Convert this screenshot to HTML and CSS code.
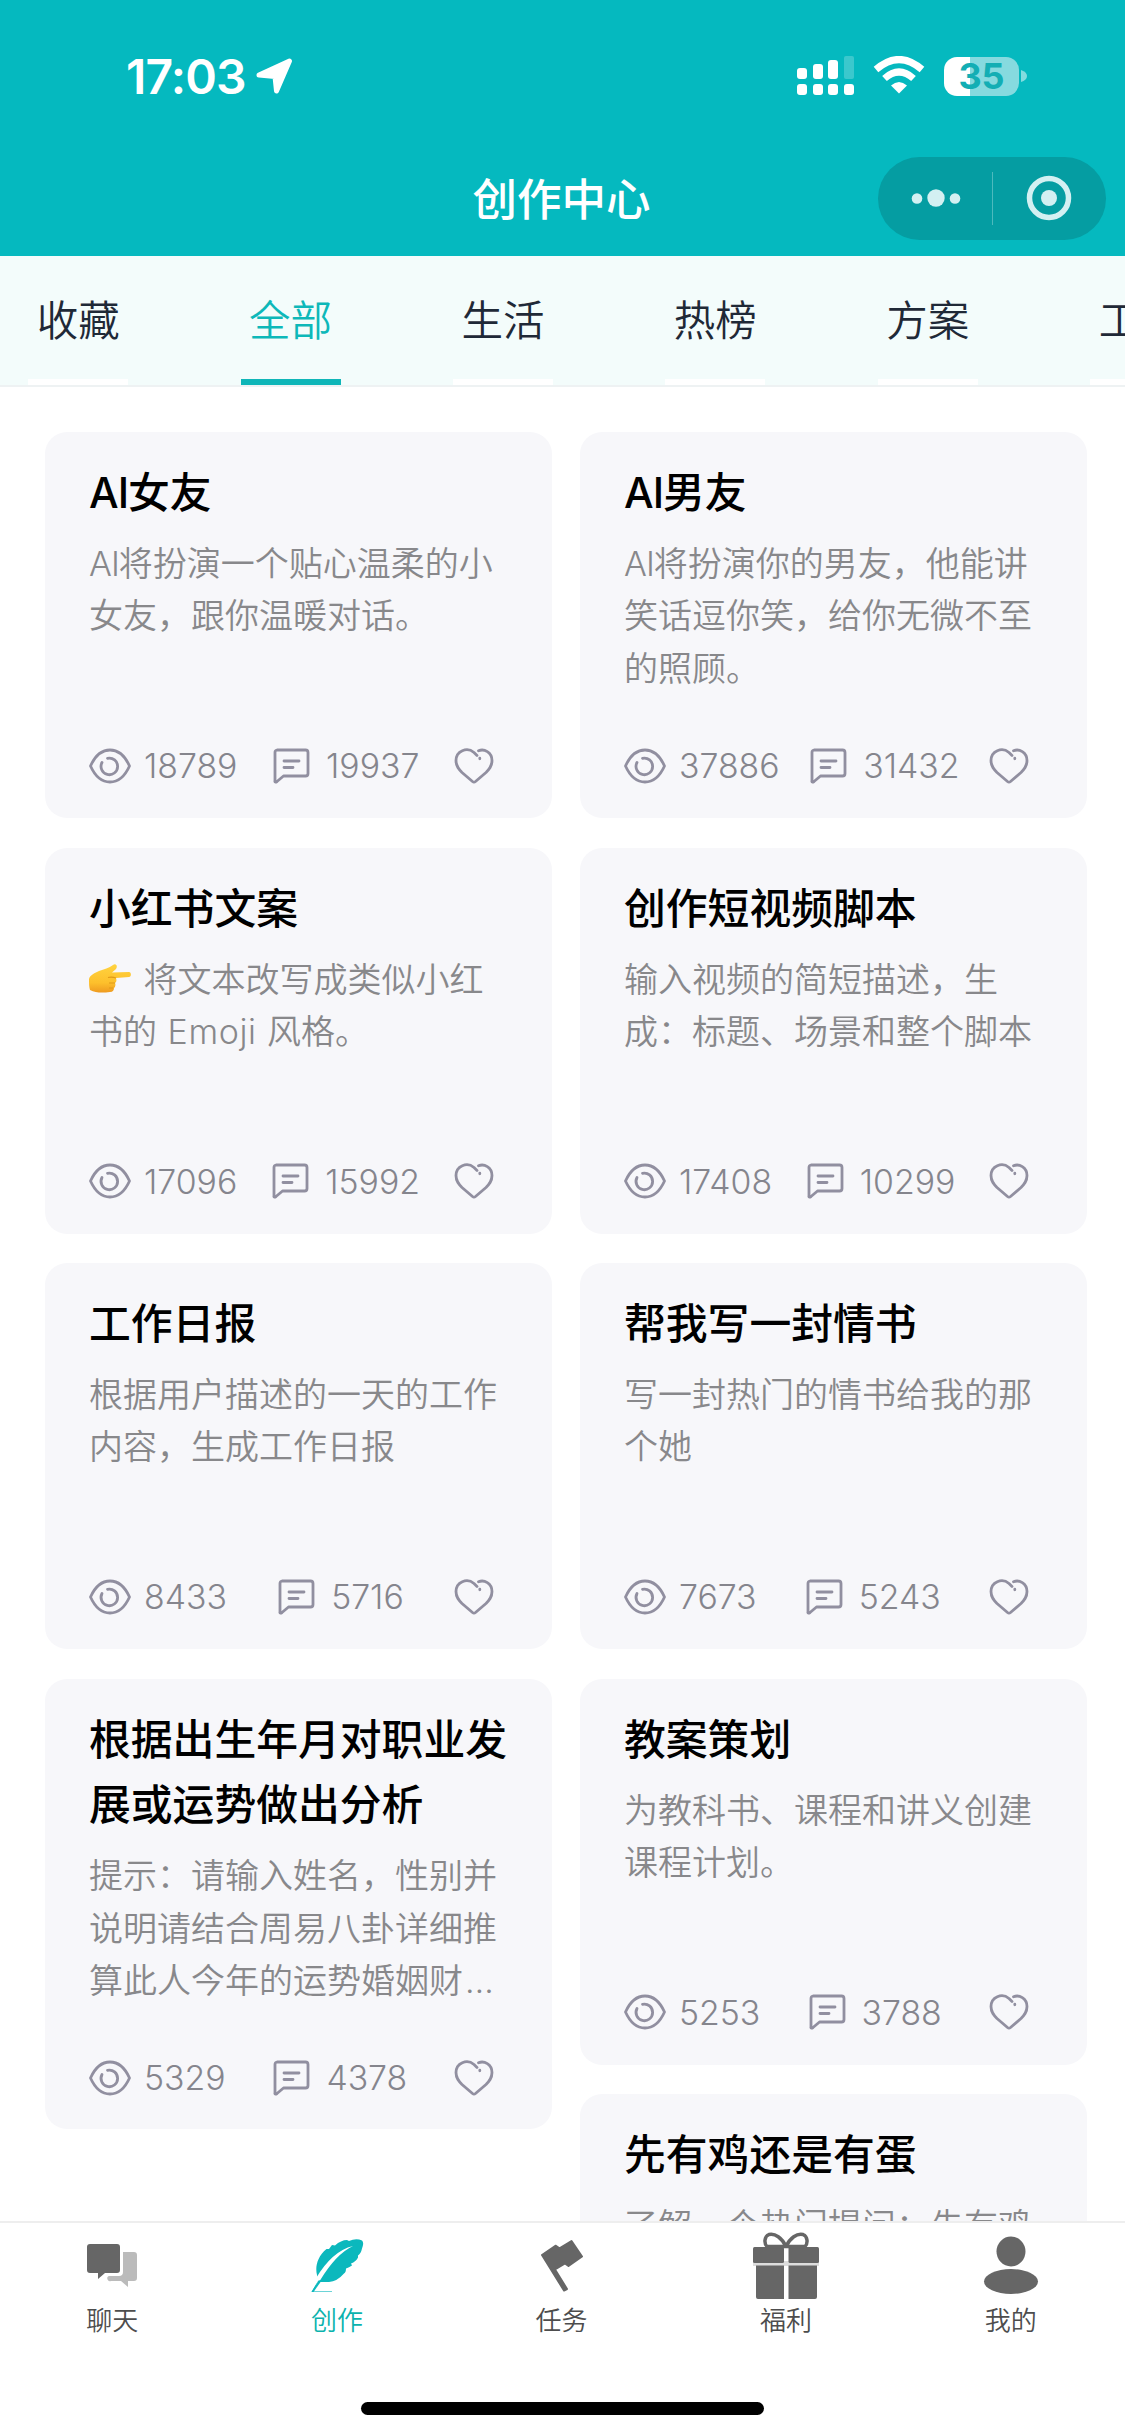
FILE: index.html
```html
<!DOCTYPE html>
<html lang="zh-CN">
<head>
<meta charset="utf-8">
<title>创作中心</title>
<link rel="stylesheet" href="styles.css">
</head>
<body>
<svg class="sprite" width="0" height="0">
  <symbol id="eye" viewBox="0 0 42 36"><path d="M1.500 18C6 8 13 2 21 2s15 6 19.500 16C36 28 29 34 21 34S6 28 1.500 18Z"/><path d="M18.500 10.300A8.300 8.300 0 1 1 13 14.500"/></symbol>
  <symbol id="comment" viewBox="0 0 42 36"><path d="M6 2h28.500a2.500 2.500 0 0 1 2.500 2.500v21a2.500 2.500 0 0 1-2.500 2.500H12.500L6 33.500a1 1 0 0 1-2-.700V4.500A2.500 2.500 0 0 1 6 2ZM13 13h15M13 19.500h9"/></symbol>
  <symbol id="heart" viewBox="0 0 42 36"><path d="M25.500 2.800C31 .500 39 4 39 12.500c0 6-3 9-6 12l-10.500 9c-1 .800-2 .800-3 0L9 24.500c-3-3-6-6-6-12C3 3 14-1.500 21 4.500l3 3M26.800 10.200v.600"/></symbol>
</svg>
<div class="app">
  <header class="header">
    <div class="status">
      <div class="status-left"><span class="time">17:03</span>
        <svg width="37" height="38" viewBox="0 0 37 38"><path fill="#fff" stroke="#fff" stroke-width="5" stroke-linejoin="round" d="M3 18 33.500 4 20.500 34 19 19.500Z"/></svg>
      </div>
      <div class="status-right">
        <svg width="58" height="40" viewBox="0 0 58 40" fill="#fff"><rect y="12" width="10" height="11" rx="3"/><rect x="16" y="8" width="10" height="15" rx="3"/><rect x="31" y="4" width="10" height="19" rx="3"/><rect x="47" width="10" height="23" rx="2" opacity=".22"/><rect y="28" width="10" height="11" rx="3"/><rect x="16" y="28" width="10" height="11" rx="3"/><rect x="31" y="28" width="10" height="11" rx="3"/><rect x="47" y="28" width="10" height="11" rx="3"/></svg>
        <svg class="wifi" width="52" height="38" viewBox="0 0 52 38"><g fill="none" stroke="#fff" stroke-width="7"><path d="M3 13.500Q26-6.500 49 13.500"/><path d="M11.500 22.500Q26 9.500 40.500 22.500"/></g><path fill="#fff" d="M18 29.500Q26 22.500 34 29.500L26 37.500Z"/></svg>
        <div class="battery"><span class="level">35</span></div>
        <svg width="6" height="12" viewBox="0 0 6 12"><path d="M0 0Q6 2 6 6T0 12Z" fill="#fff" opacity=".5"/></svg>
      </div>
    </div>
    <div class="titlebar">
      <h1>创作中心</h1>
      <div class="capsule">
        <svg width="228" height="83" viewBox="0 0 228 83" fill="#d3f0f2"><circle cx="39" cy="41.500" r="5.300"/><circle cx="58" cy="41" r="8.700"/><circle cx="77" cy="41.500" r="5.300"/><path d="M114 15h1v53h-1z" opacity=".35"/><circle cx="171" cy="41" r="19.500" fill="none" stroke="#d3f0f2" stroke-width="5.500"/><circle cx="171" cy="41" r="8"/></svg>
      </div>
    </div>
  </header>
  <nav class="tabs">
    <a class="tab">收藏</a><a class="tab active">全部</a><a class="tab">生活</a><a class="tab">热榜</a><a class="tab">方案</a><a class="tab">工作</a>
  </nav>
  <main class="feed">
    <div class="column">
      <article class="card"><h2><span class="latin">AI</span>女友</h2><p><span class="latin">AI</span>将扮演一个贴心温柔的小<br>女友，跟你温暖对话。</p>
        <div class="stats"><span><svg><use href="#eye"/></svg>18789</span><span><svg><use href="#comment"/></svg>19937</span><svg><use href="#heart"/></svg></div></article>
      <article class="card"><h2>小红书文案</h2><p><svg class="hand" width="42" height="30" viewBox="0 0 42 30"><defs><linearGradient id="skin" x2="0" y2="1"><stop stop-color="#ffd33f"/><stop offset=".65" stop-color="#fdc02c"/><stop offset="1" stop-color="#ee9a20"/></linearGradient></defs><path fill="url(#skin)" d="M0 15C1 11 6 9 10 7c5-2 10-3 14-6 3-2 5 1 3 4l-4 3.500 17-.500c2.500 0 2.500 5 0 5l-13 1c1 3 0 4-1 5 1 2 0 4-1 5 0 2-1 4-4 4-8 1-14 1-20-2-1-3-1-7-1-11Z"/><path d="M19 13.500q4-1 8 .500m-7 5h6m-6 5h4" stroke="#e09a18" stroke-width="1.200" fill="none"/></svg> 将文本改写成类似小红<br>书的 <span class="word">Emoji</span> 风格。</p>
        <div class="stats"><span><svg><use href="#eye"/></svg>17096</span><span><svg><use href="#comment"/></svg>15992</span><svg><use href="#heart"/></svg></div></article>
      <article class="card"><h2>工作日报</h2><p>根据用户描述的一天的工作<br>内容，生成工作日报</p>
        <div class="stats"><span><svg><use href="#eye"/></svg>8433</span><span><svg><use href="#comment"/></svg>5716</span><svg><use href="#heart"/></svg></div></article>
      <article class="card"><h2>根据出生年月对职业发<br>展或运势做出分析</h2><p>提示：请输入姓名，性别并<br>说明请结合周易八卦详细推<br>算此人今年的运势婚姻财<span class="dots">…</span></p>
        <div class="stats"><span><svg><use href="#eye"/></svg>5329</span><span><svg><use href="#comment"/></svg>4378</span><svg><use href="#heart"/></svg></div></article>
    </div>
    <div class="column">
      <article class="card"><h2><span class="latin">AI</span>男友</h2><p><span class="latin">AI</span>将扮演你的男友，他能讲<br>笑话逗你笑，给你无微不至<br>的照顾。</p>
        <div class="stats"><span><svg><use href="#eye"/></svg>37886</span><span><svg><use href="#comment"/></svg>31432</span><svg><use href="#heart"/></svg></div></article>
      <article class="card"><h2>创作短视频脚本</h2><p>输入视频的简短描述，生<br>成：标题、场景和整个脚本</p>
        <div class="stats"><span><svg><use href="#eye"/></svg>17408</span><span><svg><use href="#comment"/></svg>10299</span><svg><use href="#heart"/></svg></div></article>
      <article class="card"><h2>帮我写一封情书</h2><p>写一封热门的情书给我的那<br>个她</p>
        <div class="stats"><span><svg><use href="#eye"/></svg>7673</span><span><svg><use href="#comment"/></svg>5243</span><svg><use href="#heart"/></svg></div></article>
      <article class="card"><h2>教案策划</h2><p>为教科书、课程和讲义创建<br>课程计划。</p>
        <div class="stats"><span><svg><use href="#eye"/></svg>5253</span><span><svg><use href="#comment"/></svg>3788</span><svg><use href="#heart"/></svg></div></article>
      <article class="card"><h2>先有鸡还是有蛋</h2><p>了解一个热门提问：先有鸡</p></article>
    </div>
  </main>
  <footer class="tabbar">
    <div class="items">
      <a><svg width="70" height="70" viewBox="0 0 70 70" fill="#666"><path d="M13 12h27a3 3 0 0 1 3 3v23a3 3 0 0 1-3 3H28l-7 6v-6h-8a3 3 0 0 1-3-3V15a3 3 0 0 1 3-3Z"/><path fill="#bbb" d="M46 20h11a3 3 0 0 1 3 3v23a3 3 0 0 1-3 3h-6v6l-7-6H34a2 2 0 0 1-2-5h10q4 0 4-4Z"/></svg>聊天</a>
      <a class="on"><svg width="70" height="70" viewBox="0 0 70 70" fill="#0bb8bd"><path d="M15 43C13 35 15 25 24.500 17l2.500 0 3-4 3 .500Q39 8 45 8l2 1q7-3 13-.500c2 2 1 5 0 8q-1 5-4 7l0 2q-2 4-7 6l1 2q-3 2-6 3 0 4-2 5-7 8-15 8.500l-11 0L11.500 60 9.500 60 16 49Z"/><path d="M13.500 47Q30 19 51 14 34 22 18 48.500L12.500 57 15.500 49Z" fill="#fff"/><path d="M9.500 60 16.500 48.500 20 48 11.500 60Z"/><path d="M12 59h18v1H12Z" opacity=".6"/></svg>创作</a>
      <a><svg width="70" height="70" viewBox="0 0 70 70" fill="#666" stroke="#666" stroke-width="2" stroke-linejoin="round"><path d="M16 23 29.500 13.700l4 2.600L45.500 9 56 24.500 42.500 34l-3.500-2.500-10 6L41 57l-3 1.500Z"/></svg>任务</a>
      <a><svg width="70" height="70" viewBox="0 0 70 70" fill="#666"><path d="M2 29h66v5H2Z" fill="#ddd"/><rect x="2" y="15" width="31" height="16" rx="1.500"/><rect x="37.500" y="15" width="30.500" height="16" rx="1.500"/><path d="M5 33.500h28V67H7a2 2 0 0 1-2-2ZM37.500 33.500H66V65a2 2 0 0 1-2 2H37.500Z"/><path d="M35 14.500C31 6 24 1 18 2.500c-5 2-5 9-2 12M35 14.500C39 6 46 1 52 2.500c5 2 5 9 2 12M16 14.500h38" fill="none" stroke="#666" stroke-width="3.500"/></svg>福利</a>
      <a><svg width="70" height="70" viewBox="0 0 70 70" fill="#666"><ellipse cx="35" cy="19.500" rx="14.500" ry="15"/><ellipse cx="35" cy="49.500" rx="27" ry="12.500"/></svg>我的</a>
    </div>
    <div class="home-bar"></div>
  </footer>
</div>
</body>
</html>
```
FILE: styles.css
```css
* { box-sizing: border-box; margin: 0; padding: 0; }
body { font-family: Inter, "Noto Sans CJK SC", sans-serif; background: #fff; }
.sprite { display: block; }
.app { width: 1125px; height: 2436px; overflow: hidden; display: flex; flex-direction: column; }

.header { height: 256px; flex: none; background: #05b9bf; }
.status { height: 157px; padding: 56px 98px 0 126px; display: flex; justify-content: space-between; align-items: flex-start; color: #fff; }
.status-left, .status-right { display: flex; align-items: center; height: 40px; }
.status-left { gap: 10px; }
.time { font-size: 48px; font-weight: 600; letter-spacing: -.8px; }
.wifi { margin: 0 19px 2px 18px; }
.battery { width: 75px; height: 39px; border-radius: 13px; background: linear-gradient(90deg, #fff 35%, #86dadf 35%); display: flex; align-items: center; justify-content: center; margin-right: 2px; }
.level { font-size: 36px; font-weight: 700; color: #13aeb4; }
.titlebar { height: 83px; padding: 0 19px; display: grid; grid-template-columns: 228px 1fr 228px; align-items: start; }
.titlebar h1 { grid-column: 2; text-align: center; font-size: 44.500px; font-weight: 500; color: #fff; line-height: 83px; padding: 2px 2px 0 0; }
.capsule { height: 83px; border-radius: 42px; background: #059da2; }
.capsule svg { display: block; }

.tabs { height: 131px; flex: none; display: flex; margin-left: -28px; background: #f3fcfb; border-bottom: 2px solid #eef2f3; }
.tab { width: 212.400px; flex: none; display: flex; flex-direction: column; align-items: center; font-size: 41.500px; font-weight: 350; line-height: 60px; padding-top: 35px; color: #1f2937; }
.tab::after { content: ""; width: 100px; height: 6px; margin-top: 28px; background: #fff; }
.tab.active { color: #0db8b9; }
.tab.active::after { background: #0fb6b8; }

.feed { flex: 1; min-height: 0; overflow: hidden; padding: 45px 38px 0 45px; display: flex; justify-content: space-between; }
.column { width: 507px; display: flex; flex-direction: column; gap: 29.600px; }
.card { flex: none; min-height: 386px; border-radius: 22px; background: #f7f7fa; padding: 29px 20px 28px 44px; }
.card h2 { font-size: 41.800px; line-height: 65.500px; font-weight: 500; color: #000; white-space: nowrap; }
.card p { margin-top: 11.500px; height: 157px; font-size: 34px; line-height: 52.300px; font-weight: 350; color: #88888b; white-space: nowrap; }
.latin { letter-spacing: -1px; }
.word { letter-spacing: .6px; margin: 0 1px; }
.dots { letter-spacing: 1px; margin-left: 2px; }
.hand { vertical-align: -2px; margin-right: 3px; }
.stats { margin-top: 47px; width: 406px; height: 47px; display: flex; justify-content: space-between; align-items: center; font-size: 33.800px; font-weight: 300; color: #85858d; }
.stats span { display: flex; align-items: center; gap: 13px; }
.stats svg { width: 42px; height: 36px; fill: none; stroke: #918fa0; stroke-width: 2.800; stroke-linecap: round; stroke-linejoin: round; }

.tabbar { height: 215px; flex: none; border-top: 2px solid #eee; background: #fff; }
.items { display: flex; height: 179px; padding-right: 2px; }
.items a { flex: 1; display: flex; flex-direction: column; align-items: center; padding-top: 9px; font-size: 26px; font-weight: 350; line-height: 38px; color: #4d4d4d; }
.items a.on { color: #0bb3ae; }
.home-bar { width: 403px; height: 13px; border-radius: 7px; background: #000; margin: 0 auto; }
```
